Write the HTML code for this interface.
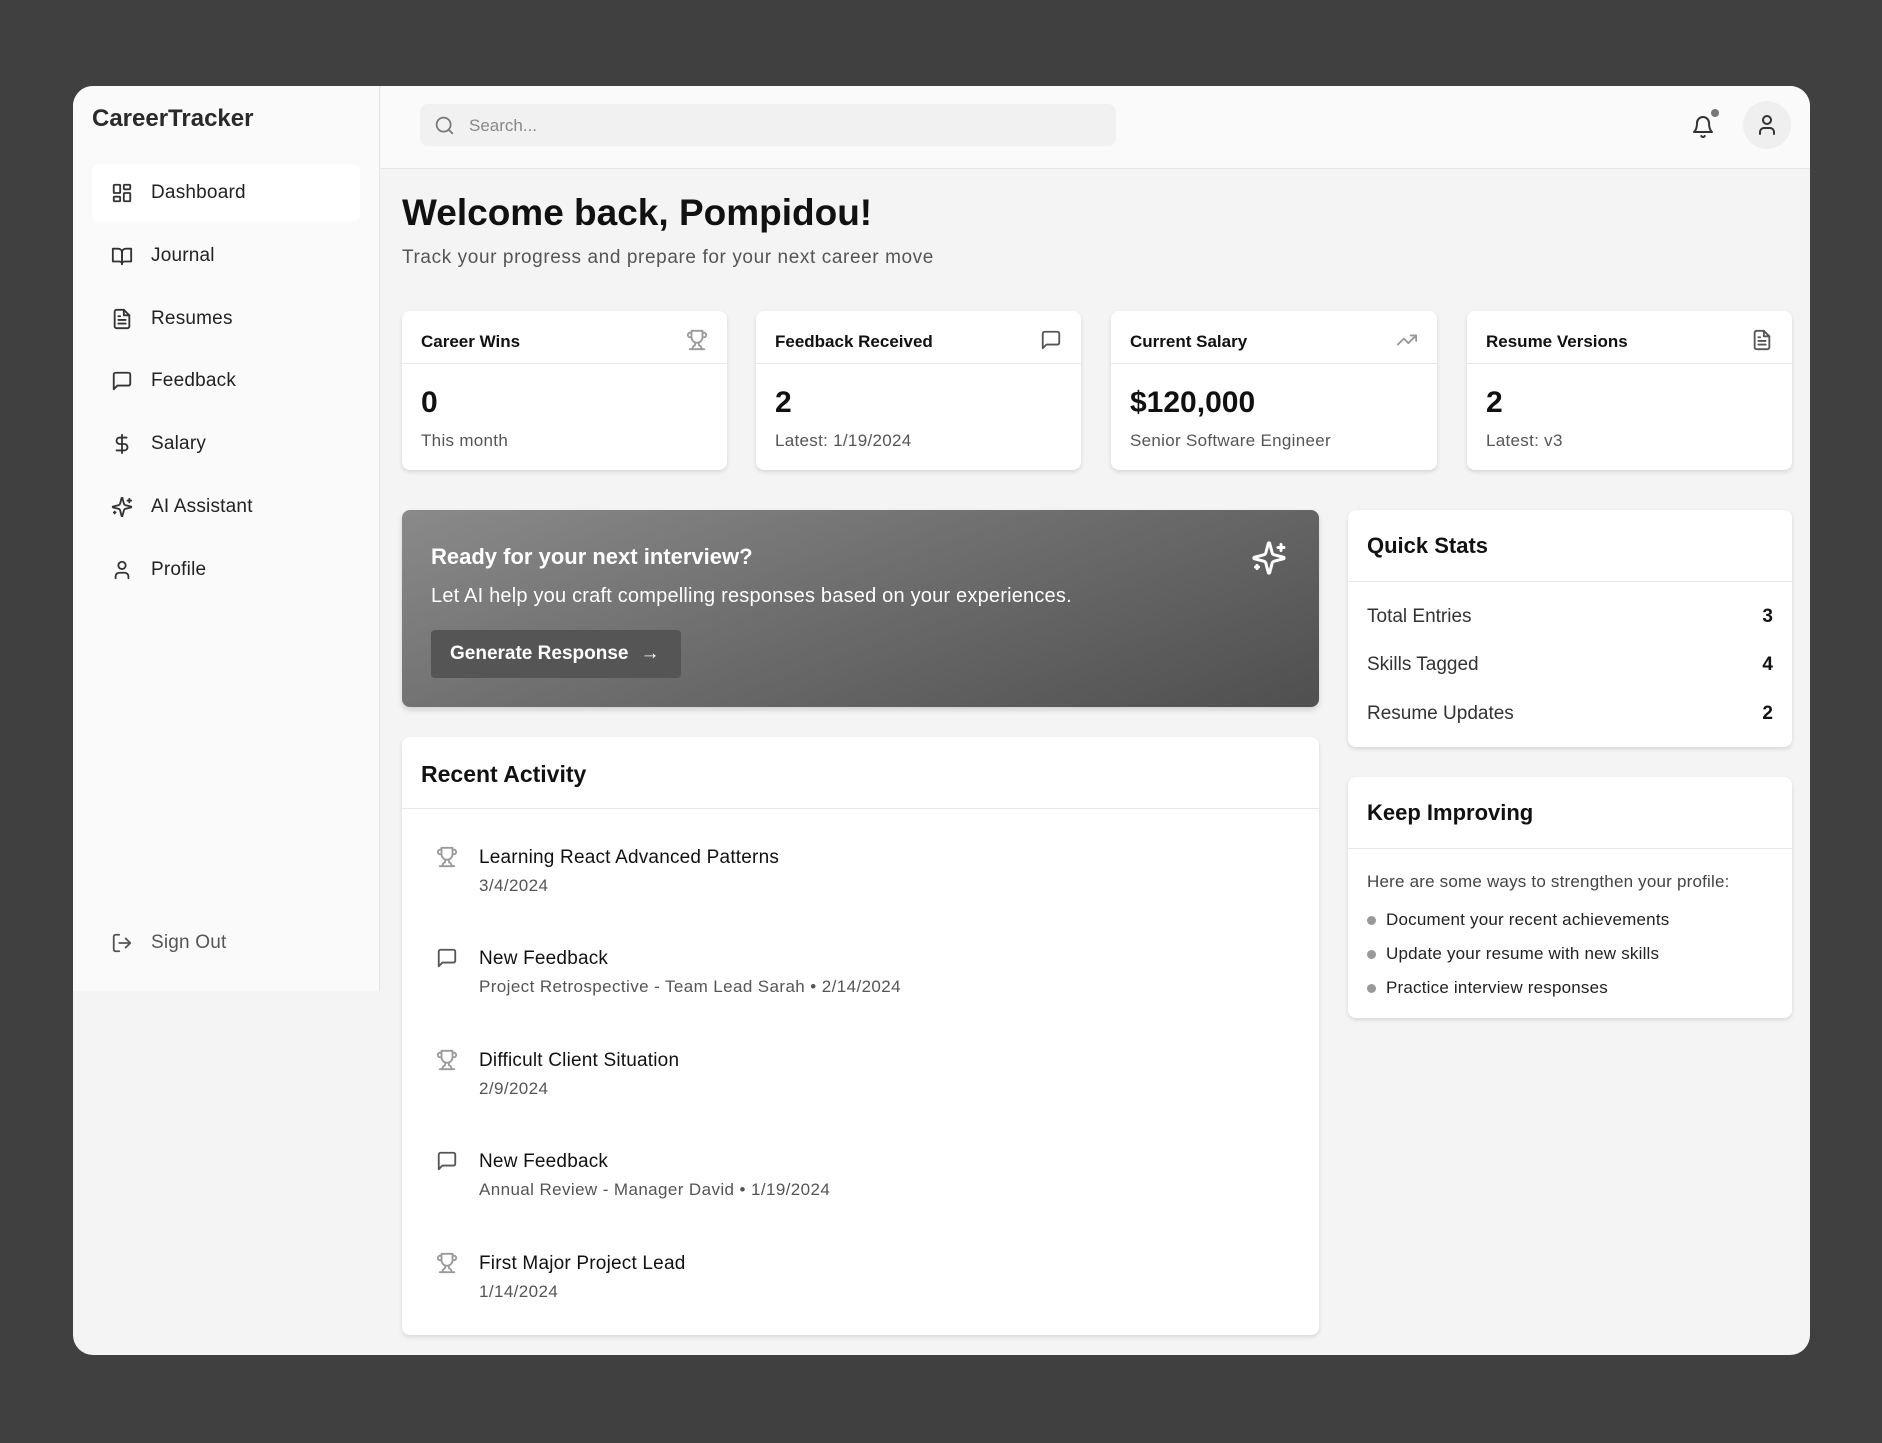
<!DOCTYPE html>
<html><head><meta charset="utf-8"><style>
*{box-sizing:border-box;margin:0;padding:0}
body{width:1882px;height:1443px;background:#404040;font-family:"Liberation Sans",sans-serif;position:relative;overflow:hidden;color:#111}
.a{position:absolute}
.panel{left:73px;top:86px;width:1737px;height:1269px;background:#f4f4f4;border-radius:20px;overflow:hidden}
.side{left:0;top:0;width:307px;height:905px;background:#fafafa;border-right:1px solid #e6e6e6}
.nav{position:absolute;left:19px;width:268px;height:58px;display:flex;align-items:center;font-size:19px;color:#222;letter-spacing:.2px}
.nav svg{margin-left:19px;margin-right:18px}
.card{position:absolute;background:#fff;border-radius:8px;box-shadow:0 2px 4px rgba(0,0,0,.12)}
.ch{position:absolute;left:0;right:0;border-bottom:1px solid #e8e8e8}
svg{fill:none;stroke:#333;stroke-width:2;stroke-linecap:round;stroke-linejoin:round}
.st .t{position:absolute;left:19px;top:21px;font-size:17px;font-weight:bold}
.st .ic{position:absolute;right:19px;top:18px}
.st .v{position:absolute;left:19px;top:75px;font-size:30px;font-weight:bold}
.st .s{position:absolute;left:19px;top:120px;font-size:17px;color:#555;letter-spacing:.3px}
.it{position:absolute;left:34px}
.it .tt{position:absolute;left:43px;top:1px;font-size:19px;white-space:nowrap;letter-spacing:.2px}
.it .dd{position:absolute;left:43px;top:30px;font-size:17px;color:#555;white-space:nowrap;letter-spacing:.4px}
.qs{position:absolute;left:19px;right:19px;font-size:19px;color:#333;display:flex;justify-content:space-between}
.qs b{color:#111}
.bl{position:absolute;left:23px;font-size:17px;color:#222;white-space:nowrap;letter-spacing:.2px}
.bl:before{content:"";position:absolute;left:-19px;top:6px;width:9px;height:9px;border-radius:50%;background:#999}
</style></head><body>
<div class="a panel">
 <div class="a side">
  <div class="a" style="left:19px;top:19px;font-size:24px;font-weight:bold;color:#2a2a2a">CareerTracker</div>
  <div class="nav" style="top:78px;background:#fff;border-radius:8px"><svg width="22" height="22" viewBox="0 0 24 24"><rect x="3" y="3" width="7" height="9" rx="1"/><rect x="14" y="3" width="7" height="5" rx="1"/><rect x="14" y="12" width="7" height="9" rx="1"/><rect x="3" y="16" width="7" height="5" rx="1"/></svg>Dashboard</div>
  <div class="nav" style="top:141px"><svg width="22" height="22" viewBox="0 0 24 24"><path d="M2 4h6a4 4 0 0 1 4 4v13a3 3 0 0 0-3-3H2z"/><path d="M22 4h-6a4 4 0 0 0-4 4v13a3 3 0 0 1 3-3h7z"/></svg>Journal</div>
  <div class="nav" style="top:204px"><svg width="22" height="22" viewBox="0 0 24 24"><path d="M14 2H6a2 2 0 0 0-2 2v16a2 2 0 0 0 2 2h12a2 2 0 0 0 2-2V8z"/><path d="M14 2v6h6M16 13H8M16 17H8M10 9H8"/></svg>Resumes</div>
  <div class="nav" style="top:266px"><svg width="22" height="22" viewBox="0 0 24 24"><path d="M21 15a2 2 0 0 1-2 2H7l-4 4V5a2 2 0 0 1 2-2h14a2 2 0 0 1 2 2z"/></svg>Feedback</div>
  <div class="nav" style="top:329px"><svg width="22" height="22" viewBox="0 0 24 24"><path d="M12 2v20M17 5H9.5a3.5 3.5 0 0 0 0 7h5a3.5 3.5 0 0 1 0 7H6"/></svg>Salary</div>
  <div class="nav" style="top:392px"><svg width="22" height="22" viewBox="0 0 24 24"><path d="M9.9 15.5A2 2 0 0 0 8.5 14.1L2.4 12.5a.5.5 0 0 1 0-1l6.1-1.6A2 2 0 0 0 9.9 8.5l1.6-6.1a.5.5 0 0 1 1 0l1.6 6.1a2 2 0 0 0 1.4 1.4l6.1 1.6a.5.5 0 0 1 0 1l-6.1 1.6a2 2 0 0 0-1.4 1.4l-1.6 6.1a.5.5 0 0 1-1 0z"/><path d="M20 3v4M22 5h-4M4 17v2M5 18H3"/></svg>AI Assistant</div>
  <div class="nav" style="top:455px"><svg width="22" height="22" viewBox="0 0 24 24"><circle cx="12" cy="7" r="4"/><path d="M19 21v-2a4 4 0 0 0-4-4H9a4 4 0 0 0-4 4v2"/></svg>Profile</div>
  <div class="nav" style="top:828px;color:#555"><svg width="22" height="22" viewBox="0 0 24 24" style="stroke:#555"><path d="M9 21H5a2 2 0 0 1-2-2V5a2 2 0 0 1 2-2h4M16 17l5-5-5-5M21 12H9"/></svg>Sign Out</div>
 </div>
 <div class="a" style="left:308px;top:0;right:0;height:83px;background:#fafafa;border-bottom:1px solid #e6e6e6">
  <div class="a" style="left:39px;top:18px;width:696px;height:42px;background:#f1f1f1;border-radius:8px">
   <svg class="a" style="left:14px;top:11px;stroke:#777" width="21" height="21" viewBox="0 0 24 24"><circle cx="11" cy="11" r="8"/><path d="M21 21l-4.3-4.3"/></svg>
   <div class="a" style="left:49px;top:12px;font-size:17px;color:#888">Search...</div>
  </div>
  <svg class="a" style="left:1310px;top:29px" width="24" height="24" viewBox="0 0 24 24"><path d="M6 8a6 6 0 0 1 12 0c0 7 3 9 3 9H3s3-2 3-9M10.3 21a1.94 1.94 0 0 0 3.4 0"/></svg>
  <div class="a" style="left:1330px;top:23px;width:8px;height:8px;border-radius:50%;background:#777"></div>
  <div class="a" style="left:1362px;top:15px;width:48px;height:48px;border-radius:50%;background:#efefef"><svg class="a" style="left:12px;top:12px" width="24" height="24" viewBox="0 0 24 24"><circle cx="12" cy="7" r="4"/><path d="M19 21v-2a4 4 0 0 0-4-4H9a4 4 0 0 0-4 4v2"/></svg></div>
 </div>
 <div class="a" style="left:329px;top:106px;font-size:37px;font-weight:bold">Welcome back, Pompidou!</div>
 <div class="a" style="left:329px;top:161px;font-size:19px;color:#555;letter-spacing:.6px">Track your progress and prepare for your next career move</div>

 <div class="card st" style="left:329px;top:225px;width:325px;height:159px"><div class="ch" style="top:0;height:53px"></div><div class="t">Career Wins</div><svg class="ic" style="stroke:#999" width="22" height="22" viewBox="0 0 24 24"><path d="M6 9H4.5a2.5 2.5 0 0 1 0-5H6M18 9h1.5a2.5 2.5 0 0 0 0-5H18M4 22h16M10 14.7V17c0 .6-.5 1-1 1.2C7.9 18.8 7 20.2 7 22M14 14.7V17c0 .6.5 1 1 1.2 1.1.5 2 2 2 3.8M18 2H6v7a6 6 0 0 0 12 0z"/></svg><div class="v">0</div><div class="s">This month</div></div>
 <div class="card st" style="left:683px;top:225px;width:325px;height:159px"><div class="ch" style="top:0;height:53px"></div><div class="t">Feedback Received</div><svg class="ic" style="stroke:#555" width="22" height="22" viewBox="0 0 24 24"><path d="M21 15a2 2 0 0 1-2 2H7l-4 4V5a2 2 0 0 1 2-2h14a2 2 0 0 1 2 2z"/></svg><div class="v">2</div><div class="s">Latest: 1/19/2024</div></div>
 <div class="card st" style="left:1038px;top:225px;width:326px;height:159px"><div class="ch" style="top:0;height:53px"></div><div class="t">Current Salary</div><svg class="ic" style="stroke:#999" width="22" height="22" viewBox="0 0 24 24"><path d="M22 7l-8.5 8.5-5-5L2 17M16 7h6v6"/></svg><div class="v">$120,000</div><div class="s">Senior Software Engineer</div></div>
 <div class="card st" style="left:1394px;top:225px;width:325px;height:159px"><div class="ch" style="top:0;height:53px"></div><div class="t">Resume Versions</div><svg class="ic" style="stroke:#555" width="22" height="22" viewBox="0 0 24 24"><path d="M14 2H6a2 2 0 0 0-2 2v16a2 2 0 0 0 2 2h12a2 2 0 0 0 2-2V8z"/><path d="M14 2v6h6M16 13H8M16 17H8M10 9H8"/></svg><div class="v">2</div><div class="s">Latest: v3</div></div>

 <div class="a" style="left:329px;top:424px;width:917px;height:197px;border-radius:8px;background:linear-gradient(160deg,#8a8a8a 0%,#6e6e6e 45%,#4f4f4f 100%);box-shadow:0 3px 6px rgba(0,0,0,.15)">
  <div class="a" style="left:29px;top:34px;font-size:22px;font-weight:bold;color:#fff">Ready for your next interview?</div>
  <div class="a" style="left:29px;top:75px;font-size:20px;color:#fff;letter-spacing:.2px">Let AI help you craft compelling responses based on your experiences.</div>
  <div class="a" style="left:29px;top:120px;width:250px;height:48px;background:#555;border-radius:4px;color:#fff;font-size:19px;font-weight:bold;display:flex;align-items:center;padding-left:19px">Generate Response <span style="font-weight:normal;margin-left:12px">→</span></div>
  <svg class="a" style="left:849px;top:30px;stroke:#fff" width="36" height="36" viewBox="0 0 24 24"><path d="M9.9 15.5A2 2 0 0 0 8.5 14.1L2.4 12.5a.5.5 0 0 1 0-1l6.1-1.6A2 2 0 0 0 9.9 8.5l1.6-6.1a.5.5 0 0 1 1 0l1.6 6.1a2 2 0 0 0 1.4 1.4l6.1 1.6a.5.5 0 0 1 0 1l-6.1 1.6a2 2 0 0 0-1.4 1.4l-1.6 6.1a.5.5 0 0 1-1 0z"/><path d="M20 3v4M22 5h-4M4 17v2M5 18H3"/></svg>
 </div>

 <div class="card" style="left:329px;top:651px;width:917px;height:598px">
  <div class="ch" style="top:0;height:72px"></div>
  <div class="a" style="left:19px;top:24px;font-size:23px;font-weight:bold">Recent Activity</div>
  <div class="it" style="top:109px"><svg class="a" style="left:0;top:0;stroke:#999" width="22" height="22" viewBox="0 0 24 24"><path d="M6 9H4.5a2.5 2.5 0 0 1 0-5H6M18 9h1.5a2.5 2.5 0 0 0 0-5H18M4 22h16M10 14.7V17c0 .6-.5 1-1 1.2C7.9 18.8 7 20.2 7 22M14 14.7V17c0 .6.5 1 1 1.2 1.1.5 2 2 2 3.8M18 2H6v7a6 6 0 0 0 12 0z"/></svg><div class="tt">Learning React Advanced Patterns</div><div class="dd">3/4/2024</div></div>
  <div class="it" style="top:210px"><svg class="a" style="left:0;top:0;stroke:#555" width="22" height="22" viewBox="0 0 24 24"><path d="M21 15a2 2 0 0 1-2 2H7l-4 4V5a2 2 0 0 1 2-2h14a2 2 0 0 1 2 2z"/></svg><div class="tt">New Feedback</div><div class="dd">Project Retrospective - Team Lead Sarah • 2/14/2024</div></div>
  <div class="it" style="top:312px"><svg class="a" style="left:0;top:0;stroke:#999" width="22" height="22" viewBox="0 0 24 24"><path d="M6 9H4.5a2.5 2.5 0 0 1 0-5H6M18 9h1.5a2.5 2.5 0 0 0 0-5H18M4 22h16M10 14.7V17c0 .6-.5 1-1 1.2C7.9 18.8 7 20.2 7 22M14 14.7V17c0 .6.5 1 1 1.2 1.1.5 2 2 2 3.8M18 2H6v7a6 6 0 0 0 12 0z"/></svg><div class="tt">Difficult Client Situation</div><div class="dd">2/9/2024</div></div>
  <div class="it" style="top:413px"><svg class="a" style="left:0;top:0;stroke:#555" width="22" height="22" viewBox="0 0 24 24"><path d="M21 15a2 2 0 0 1-2 2H7l-4 4V5a2 2 0 0 1 2-2h14a2 2 0 0 1 2 2z"/></svg><div class="tt">New Feedback</div><div class="dd">Annual Review - Manager David • 1/19/2024</div></div>
  <div class="it" style="top:515px"><svg class="a" style="left:0;top:0;stroke:#999" width="22" height="22" viewBox="0 0 24 24"><path d="M6 9H4.5a2.5 2.5 0 0 1 0-5H6M18 9h1.5a2.5 2.5 0 0 0 0-5H18M4 22h16M10 14.7V17c0 .6-.5 1-1 1.2C7.9 18.8 7 20.2 7 22M14 14.7V17c0 .6.5 1 1 1.2 1.1.5 2 2 2 3.8M18 2H6v7a6 6 0 0 0 12 0z"/></svg><div class="tt">First Major Project Lead</div><div class="dd">1/14/2024</div></div>
 </div>

 <div class="card" style="left:1275px;top:424px;width:444px;height:237px">
  <div class="ch" style="top:0;height:72px"></div>
  <div class="a" style="left:19px;top:23px;font-size:22px;font-weight:bold">Quick Stats</div>
  <div class="qs" style="top:96px"><span>Total Entries</span><b>3</b></div>
  <div class="qs" style="top:144px"><span>Skills Tagged</span><b>4</b></div>
  <div class="qs" style="top:193px"><span>Resume Updates</span><b>2</b></div>
 </div>
 <div class="card" style="left:1275px;top:691px;width:444px;height:241px">
  <div class="ch" style="top:0;height:72px"></div>
  <div class="a" style="left:19px;top:23px;font-size:22px;font-weight:bold">Keep Improving</div>
  <div class="a" style="left:19px;top:95px;font-size:17px;color:#444;letter-spacing:.2px">Here are some ways to strengthen your profile:</div>
  <div class="bl" style="left:38px;top:133px">Document your recent achievements</div>
  <div class="bl" style="left:38px;top:167px">Update your resume with new skills</div>
  <div class="bl" style="left:38px;top:201px">Practice interview responses</div>
 </div>
</div>
</body></html>
